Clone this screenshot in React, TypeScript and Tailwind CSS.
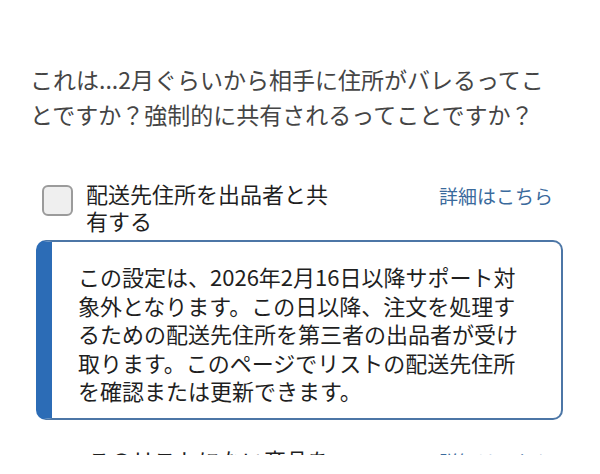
import type React from 'react';

const font = { fontFamily: '"Noto Sans CJK JP", "Noto Sans", sans-serif' };

interface SettingRowProps {
  label: React.ReactNode;
  showCheckbox?: boolean;
}

const SettingRow: React.FC<SettingRowProps> = ({ label, showCheckbox = true }) => (
  <div className="flex items-start justify-between pl-[6px] pr-[10px]">
    <div className="flex items-start gap-[13px]">
      {showCheckbox ? (
        <span className="mt-[5px] block h-[31px] w-[31px] shrink-0 rounded-[6px] border-2 border-[#9b9b9b] bg-[#efefef]" />
      ) : (
        <span className="block w-[33px] shrink-0" />
      )}
      <span className="block w-[255px] text-[22px] leading-[27px] text-[#1f1f1f]">{label}</span>
    </div>
    <a className="mt-[2px] text-[19px] leading-[27px] text-[#3a6a9c]">詳細はこちら</a>
  </div>
);

export default function App() {
  return (
    <div className="h-[455px] overflow-hidden bg-white" style={font}>
      {/* Question */}
      <p className="pl-[30px] pt-[62px] text-[23px] leading-[35px] text-[#454545]">
        これは...2月ぐらいから相手に住所がバレるってこ
        <br />
        とですか？強制的に共有されるってことですか？
      </p>

      <div className="ml-[36px] mt-[48px] w-[527px]">
        <SettingRow label="配送先住所を出品者と共有する" />

        {/* Notice */}
        <div className="mt-[6px] h-[180px] rounded-[10px] border-2 border-l-[16px] border-[#4c76a6] border-l-[#2c6cb6] pl-[26px] pt-[20px] text-[22px] leading-[28.5px] text-[#1f1f1f]">
          この設定は、2026年2月16日以降サポート対
          <br />
          象外となります。この日以降、注文を処理す
          <br />
          るための配送先住所を第三者の出品者が受け
          <br />
          取ります。このページでリストの配送先住所
          <br />
          を確認または更新できます。
        </div>

        <div className="mt-[26px]">
          <SettingRow label="このリストにない商品を出品者と共有する" showCheckbox={false} />
        </div>
      </div>
    </div>
  );
}
